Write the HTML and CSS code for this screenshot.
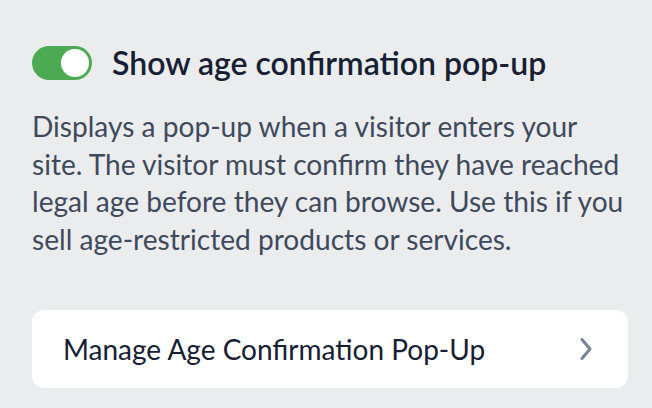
FILE: index.html
```html
<!DOCTYPE html>
<html lang="en">
<head>
<meta charset="utf-8">
<link rel="stylesheet" href="styles.css">
</head>
<body>
<div class="panel">
  <div class="toggle-row">
    <span class="switch" role="switch" aria-checked="true"><span class="knob"></span></span>
    <h2 class="title">Show age confirmation pop-up</h2>
  </div>
  <p class="desc">Displays a pop-up when a visitor enters your site. The visitor must confirm they have reached legal age before they can browse. Use this if you sell age-restricted products or services.</p>
  <div class="card">
    <span class="card-label">Manage Age Confirmation Pop-Up</span>
    <svg class="chevron" width="14" height="26" viewBox="0 0 14 26" aria-hidden="true"><path d="M3 3.5 L11 13 L3 22.5" fill="none" stroke="#788393" stroke-width="3" stroke-linecap="round" stroke-linejoin="round"/></svg>
  </div>
</div>
</body>
</html>
```

FILE: styles.css
```css
html, body {
  margin: 0;
  padding: 0;
  background: #ebecee;
}
body {
  font-family: Lato, "Noto Sans", sans-serif;
  width: 652px;
  height: 408px;
  overflow: hidden;
}
.panel {
  padding: 46px 24px 0 32px;
}
.toggle-row {
  display: flex;
  align-items: center;
  gap: 20px;
}
.switch {
  display: flex;
  align-items: center;
  justify-content: flex-end;
  width: 60px;
  height: 34px;
  padding: 0 3px;
  box-sizing: border-box;
  border-radius: 17px;
  background: #4caa53;
  flex: none;
}
.knob {
  width: 28px;
  height: 28px;
  border-radius: 50%;
  background: #fff;
}
.title {
  margin: 0;
  font-size: 32px;
  font-weight: 600;
  color: #162033;
  line-height: 34px;
}
.desc {
  margin: 28px 0 0 0;
  font-size: 28.1px;
  line-height: 37.5px;
  color: #3e4a5b;
  width: 600px;
}
.card {
  margin-top: 52px;
  width: 596px;
  height: 78px;
  box-sizing: border-box;
  background: #fff;
  border-radius: 12px;
  display: flex;
  align-items: center;
  justify-content: space-between;
  padding: 0 35px 0 31px;
}
.card-label {
  font-size: 28px;
  color: #172033;
}
.chevron {
  display: block;
}
```
